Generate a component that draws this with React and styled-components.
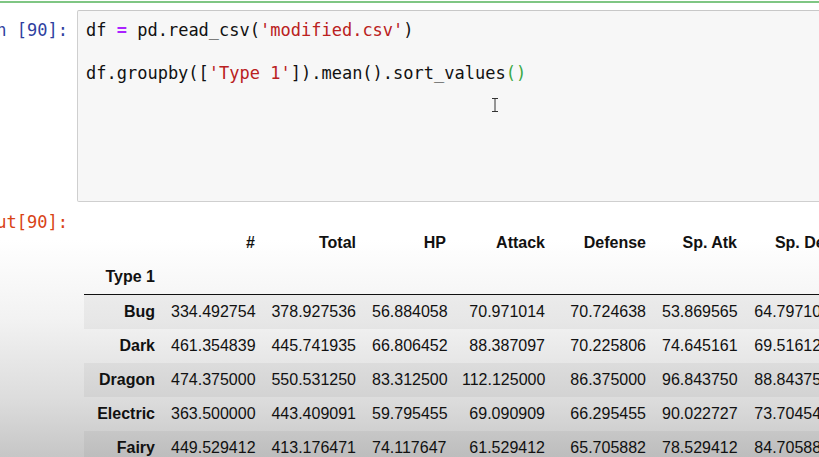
import styled, { createGlobalStyle } from 'styled-components';

const GlobalStyle = createGlobalStyle`
  html, body {
    margin: 0;
    height: 100%;
  }
  body {
    overflow: hidden;
    background: linear-gradient(
      to bottom,
      #ffffff 0,
      #ffffff 240px,
      #f2f2f2 320px,
      #dcdcdc 400px,
      #c6c6c6 457px
    );
  }
`

const Cell = styled.div`
  border-top: 2px solid #7fc683;
  margin-top: 1px;
  padding-top: 7px;
`

const Row = styled.div`
  display: flex;
  align-items: flex-start;
  gap: 9px;
`

const Prompt = styled.div`
  flex: 0 0 68px;
  width: 68px;
  min-width: 0;
  display: flex;
  justify-content: flex-end;
  white-space: nowrap;
  font-family: "DejaVu Sans Mono", monospace;
  font-size: 17px;
  line-height: 21.5px;
  color: ${(p) => p.color};
  padding-top: ${(p) => p.top}px;
`

const CodeBox = styled.div`
  position: relative;
  flex: 1 0 auto;
  margin-right: -20px;
  box-sizing: content-box;
  background: #f7f7f7;
  border: 1px solid #cfcfcf;
  border-top-color: #c8c8c8;
  border-radius: 2px;
  padding: 9px 8px 0;
  height: 181px;
  font-family: "DejaVu Sans Mono", monospace;
  font-size: 17px;
  line-height: 21.5px;
  color: #111;
`

const Line = styled.div`
  white-space: pre;
  height: 21.5px;
`

const Op = styled.span`
  color: #aa22ff;
  font-weight: bold;
`

const Str = styled.span`
  color: #ba2121;
`

const Match = styled.span`
  color: #3aa845;
`

const Caret = styled.svg`
  position: absolute;
  left: 413px;
  top: 87px;
`

const OutArea = styled.div`
  flex: 1 1 auto;
  min-width: 0;
  padding-left: 7px;
  padding-top: 24px;
  overflow: hidden;
`

const Table = styled.table`
  table-layout: fixed;
  width: 847px;
  border-collapse: collapse;
  border-spacing: 0;
  font-family: "Liberation Sans", Arial, sans-serif;
  font-size: 16px;
  color: #111;
  white-space: nowrap;

  thead {
    border-bottom: 1px solid #111;
  }
`

const Th = styled.th`
  text-align: right;
  font-weight: bold;
  padding: 9px 8px;
  line-height: 16px;
  overflow: visible;
`

const Td = styled.td`
  text-align: right;
  padding: 9px 8px;
  line-height: 16px;
  overflow: visible;
`

const BodyRow = styled.tr`
  background: ${(p) => (p.striped ? 'rgba(0, 0, 0, 0.045)' : 'transparent')};
`

const widths = [79, 100, 101, 90, 99, 101, 91, 93, 93];

const columns = ['#', 'Total', 'HP', 'Attack', 'Defense', 'Sp. Atk', 'Sp. Def', 'Speed'];

const rows = [
  ['Bug', '334.492754', '378.927536', '56.884058', '70.971014', '70.724638', '53.869565', '64.797101', '61.681159'],
  ['Dark', '461.354839', '445.741935', '66.806452', '88.387097', '70.225806', '74.645161', '69.516129', '76.161290'],
  ['Dragon', '474.375000', '550.531250', '83.312500', '112.125000', '86.375000', '96.843750', '88.843750', '83.031250'],
  ['Electric', '363.500000', '443.409091', '59.795455', '69.090909', '66.295455', '90.022727', '73.704545', '84.500000'],
  ['Fairy', '449.529412', '413.176471', '74.117647', '61.529412', '65.705882', '78.529412', '84.705882', '48.588235'],
];

export default function App() {
  return (
    <>
      <GlobalStyle />
      <Cell>
        <Row>
          <Prompt color="#303f9f" top={10}>In [90]:</Prompt>
          <CodeBox>
            <Line>df <Op>=</Op> pd.read_csv(<Str>'modified.csv'</Str>)</Line>
            <Line />
            <Line>df.groupby([<Str>'Type 1'</Str>]).mean().sort_values<Match>()</Match></Line>
            <Caret width="8" height="14" viewBox="0 0 8 14">
              <path d="M1 0.5h6M1 13.5h6M4 0.5v13" stroke="#333" strokeWidth="1" fill="none" />
            </Caret>
          </CodeBox>
        </Row>
        <Row>
          <Prompt color="#d84315" top={10}>Out[90]:</Prompt>
          <OutArea>
            <Table>
              <colgroup>
                {widths.map((w, i) => (
                  <col key={i} style={{ width: w }} />
                ))}
              </colgroup>
              <thead>
                <tr>
                  <Th />
                  {columns.map((c) => (
                    <Th key={c}>{c}</Th>
                  ))}
                </tr>
                <tr>
                  <Th>Type 1</Th>
                  {columns.map((c) => (
                    <Th key={c} />
                  ))}
                </tr>
              </thead>
              <tbody>
                {rows.map((r, i) => (
                  <BodyRow key={r[0]} striped={i % 2 === 0}>
                    <Th>{r[0]}</Th>
                    {r.slice(1).map((v, j) => (
                      <Td key={j}>{v}</Td>
                    ))}
                  </BodyRow>
                ))}
              </tbody>
            </Table>
          </OutArea>
        </Row>
      </Cell>
    </>
  );
}
